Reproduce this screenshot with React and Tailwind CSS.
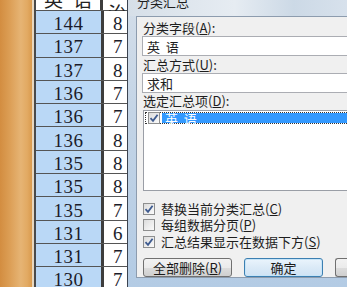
import React from "react";

const english = [144, 137, 137, 136, 136, 136, 135, 135, 135, 131, 131, 130];
const politics = [8, 7, 8, 7, 7, 8, 8, 8, 7, 6, 7, 7];

const cjk = { fontFamily: '"Noto Sans CJK SC", "Noto Sans", sans-serif' };

const Check = ({ checked }) => (
  <div className="w-[12px] h-[12px] border border-[#8e8f8f] bg-[linear-gradient(135deg,#dcdcdc,#fbfbfb)] flex items-center justify-center shrink-0">
    {checked && (
      <svg width="10" height="10" viewBox="0 0 10 10">
        <path d="M1.5 5.2 L4 7.8 L8.6 1.8" fill="none" stroke="#3d5a8f" strokeWidth="1.8" />
      </svg>
    )}
  </div>
);

const Key = ({ k }) => (
  <span>
    (<span className="underline">{k}</span>)
  </span>
);

const Button = ({ children, focus, className }) => (
  <div
    className={`h-[19px] rounded-[3px] border flex items-center justify-center text-[13px] leading-none text-[#1a1a1a] ${
      focus
        ? "border-[#3c7fb1] bg-[linear-gradient(#eaf4fc,#dbeaf7_50%,#cfe3f4)] shadow-[inset_0_0_0_1px_#c6e4f8]"
        : "border-[#707070] bg-[linear-gradient(#f2f2f2,#ebebeb_50%,#dddddd_51%,#cfcfcf)]"
    } ${className}`}
  >
    {children}
  </div>
);

const Label = ({ children, className }) => (
  <div className={`h-[13px] flex items-center pl-[1px] ${className}`}>{children}</div>
);

export default function App() {
  return (
    <div className="w-[347px] h-[287px] overflow-hidden flex bg-[#c3d4e6]">
      {/* wood desk */}
      <div className="w-[32px] shrink-0 bg-[linear-gradient(90deg,#d38d40,#dc9e55_30%,#e6b474_65%,#e2aa63_85%,#d99a4e)]" />
      <div className="w-[2px] shrink-0 bg-[#e8d8c0]" />

      {/* spreadsheet */}
      <div
        className="w-[93px] shrink-0 overflow-hidden flex flex-col -mt-[12px] border-l-2 border-[#4a4a4a]"
        style={{ fontFamily: '"Liberation Serif", serif' }}
      >
        <div className="h-[23px] shrink-0 flex border-b border-[#555]">
          <div
            className="w-[65px] bg-white flex items-center justify-between px-[8px] text-[19px] text-[#222]"
            style={cjk}
          >
            <span>英</span>
            <span>语</span>
          </div>
          <div className="w-[3px] bg-[#3d3d3d]" />
          <div className="flex-1 bg-white pl-[5px] text-[19px] text-[#222] flex items-center" style={cjk}>
            政治
          </div>
        </div>
        {english.map((n, i) => (
          <div key={i} className="h-[23.3px] shrink-0 flex border-b border-[#555]">
            <div className="w-[65px] bg-[#bad8f6] flex items-center justify-center pt-[3px] text-[19px] leading-none tracking-[0.5px] text-[#1c1c2a]">
              {n}
            </div>
            <div className="w-[3px] bg-[#3d3d3d]" />
            <div className="flex-1 bg-white flex items-center pl-[9px] pt-[3px] text-[19px] leading-none text-[#1c1c2a]">
              {politics[i]}
            </div>
          </div>
        ))}
      </div>

      {/* dialog */}
      <div className="flex-1 flex flex-col border-l border-[#3b4350] bg-[linear-gradient(180deg,#d4dee9,#c3d4e6_40%,#b3cbe4)]" style={cjk}>
        <div className="h-[16px] shrink-0 flex justify-between items-start pl-[9px] bg-[linear-gradient(90deg,#d6dfe8,#e6ecf2_45%,#ccd9e6_70%,#dbe4ee)]">
          <span className="text-[13px] leading-none -mt-[5px] text-[#1e1e1e]">分类汇总</span>
          <div className="w-[8px] h-[10px] -mt-[2px] rounded-bl-[3px] border-l border-b border-[#5a6470] bg-[#e8edf2]" />
        </div>
        <div className="flex-1 flex pl-[8px] pb-[9px]">
          <div className="flex-1 flex flex-col bg-[#f0f0f0] border-l border-t border-b border-[#8d9cae] pl-[5px] text-[13px] leading-[13px] text-[#1e1e1e]">
            <Label className="mt-[4px]">
              分类字段<Key k="A" />:
            </Label>
            <div className="mt-[2px] h-[20px] shrink-0 bg-white border border-r-0 border-[#abadb3] flex items-center pl-[4px]">
              英&nbsp;&nbsp;语
            </div>
            <Label className="mt-[2px]">
              汇总方式<Key k="U" />:
            </Label>
            <div className="mt-[2px] h-[20px] shrink-0 bg-white border border-r-0 border-[#abadb3] flex items-center pl-[4px]">
              求和
            </div>
            <Label className="mt-[1px]">
              选定汇总项<Key k="D" />:
            </Label>
            <div className="mt-[3px] ml-[1px] h-[81px] shrink-0 bg-white border border-r-0 border-[#9a9ea6] pt-[1px] pl-[1px]">
              <div className="h-[12px] flex items-center border border-dotted border-[#333] border-r-0">
                <div className="pl-[2px] pr-[2px]">
                  <Check checked />
                </div>
                <div className="flex-1 h-full bg-[#3399ff] text-white flex items-center pl-[3px] text-[13px]">
                  英&nbsp;&nbsp;语
                </div>
              </div>
            </div>
            <div className="mt-[11px] ml-[1px] flex items-center gap-[6px] h-[13px]">
              <Check checked />
              <span>
                替换当前分类汇总<Key k="C" />
              </span>
            </div>
            <div className="mt-[3px] ml-[1px] flex items-center gap-[6px] h-[13px]">
              <Check />
              <span>
                每组数据分页<Key k="P" />
              </span>
            </div>
            <div className="mt-[4px] ml-[1px] flex items-center gap-[6px] h-[13px]">
              <Check checked />
              <span>
                汇总结果显示在数据下方<Key k="S" />
              </span>
            </div>
            <div className="mt-[10px] ml-[1px] flex gap-[12px]">
              <Button className="w-[89px]">
                全部删除<Key k="R" />
              </Button>
              <Button focus className="w-[79px]">
                确定
              </Button>
              <Button className="w-[30px] rounded-r-none border-r-0" />
            </div>
          </div>
        </div>
      </div>
    </div>
  );
}
